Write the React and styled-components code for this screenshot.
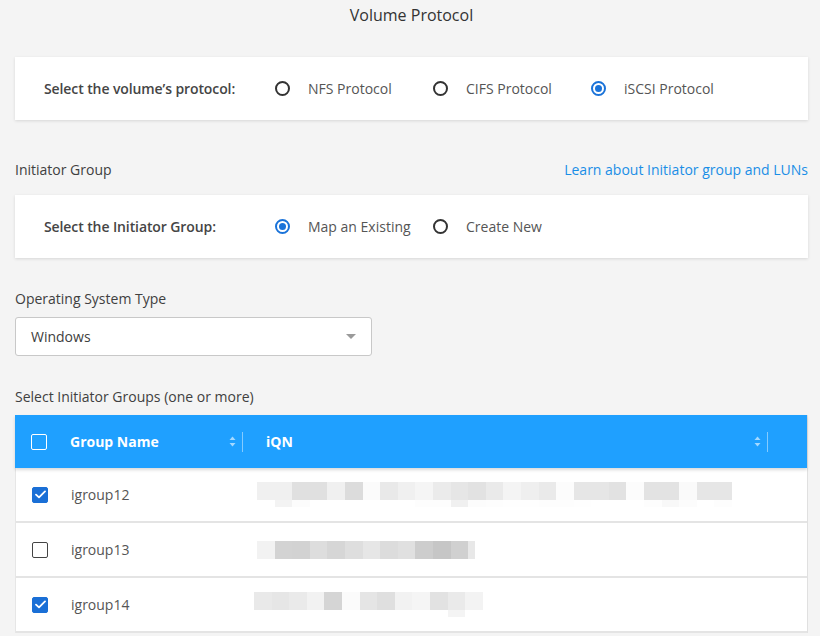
import React from "react";
import styled, { createGlobalStyle } from "styled-components";

const Global = createGlobalStyle`
  html, body { margin: 0; padding: 0; background: #f4f4f4; }
  body { font-family: "Open Sans", "Liberation Sans", sans-serif; color: #404040; }
  * { box-sizing: border-box; }
`;

const Page = styled.div`
  width: 820px;
  height: 636px;
  overflow: hidden;
  padding: 4px 12px 0 15px;
  background: #f4f4f4;
`;

const Title = styled.h1`
  margin: 0;
  height: 22px;
  line-height: 22px;
  font-size: 16px;
  font-weight: 500;
  color: #333;
  text-align: center;
`;

const Card = styled.div`
  margin-top: ${(p) => p.$mt || 0}px;
  height: 63px;
  background: #fff;
  box-shadow: 0 1px 3px rgba(0, 0, 0, 0.12);
  display: flex;
  align-items: center;
  padding-left: 29px;
`;

const CardLabel = styled.div`
  width: 231px;
  font-size: 14px;
  font-weight: 600;
  color: #454545;
  letter-spacing: -0.1px;
`;

const Option = styled.label`
  width: 158px;
  display: flex;
  align-items: center;
  gap: 18px;
  font-size: 14px;
  color: #555;
`;

const RadioCircle = styled.span`
  width: 15px;
  height: 15px;
  border-radius: 50%;
  border: 2px solid ${(p) => (p.$on ? "#1a73d9" : "#333")};
  display: flex;
  align-items: center;
  justify-content: center;
  flex-shrink: 0;
  &::after {
    content: "";
    width: 7px;
    height: 7px;
    border-radius: 50%;
    background: ${(p) => (p.$on ? "#1a73d9" : "transparent")};
  }
`;

const SectionHead = styled.div`
  margin-top: 37px;
  display: flex;
  justify-content: space-between;
  align-items: center;
  height: 24px;
  font-size: 14px;
  color: #404040;
`;

const Link = styled.a`
  color: #1a8ee6;
  text-decoration: none;
  font-size: 14px;
`;

const FieldLabel = styled.div`
  margin-top: ${(p) => p.$mt}px;
  height: 20px;
  line-height: 20px;
  font-size: 14px;
  color: #404040;
`;

const Select = styled.div`
  margin-top: 8px;
  width: 357px;
  height: 39px;
  background: #fff;
  border: 1px solid #c8c8c8;
  border-radius: 3px;
  display: flex;
  align-items: center;
  justify-content: space-between;
  padding: 0 15px 0 15px;
  font-size: 14px;
  color: #404040;
`;

const Caret = styled.span`
  width: 0;
  height: 0;
  border-left: 5px solid transparent;
  border-right: 5px solid transparent;
  border-top: 5px solid #9a9a9a;
`;

const Table = styled.div`
  margin-top: 8px;
  background: #fff;
  border-left: 1px solid #e6e6e6;
  border-right: 1px solid #e0e0e0;
`;

const HeaderRow = styled.div`
  display: grid;
  grid-template-columns: 55px 173px 525px 1fr;
  height: 53px;
  align-items: center;
  background: #1fa0ff;
  box-shadow: 0 2px 3px rgba(0, 0, 0, 0.15);
  position: relative;
  z-index: 1;
  margin-left: -1px;
`;

const Row = styled.div`
  display: grid;
  grid-template-columns: 55px 173px 1fr;
  height: 55px;
  align-items: center;
  border-bottom: 2px solid #e4e4e4;
`;

const CheckCell = styled.div`
  padding-left: 16px;
  display: flex;
  align-items: center;
`;

const Box = styled.span`
  width: 16px;
  height: 16px;
  border-radius: 2px;
  border: 1.5px solid ${(p) => (p.$light ? "#fff" : p.$on ? "#1a6fd6" : "#444")};
  background: ${(p) => (p.$on ? "#1a6fd6" : "transparent")};
  display: flex;
  align-items: center;
  justify-content: center;
`;

const HeadCell = styled.div`
  height: 100%;
  display: flex;
  align-items: center;
  justify-content: space-between;
  padding-left: ${(p) => p.$pl || 0}px;
  font-size: 14px;
  font-weight: 700;
  color: #fff;
`;

const SortWrap = styled.div`
  display: flex;
  align-items: center;
  height: 100%;
`;

const Divider = styled.span`
  width: 1px;
  height: 20px;
  background: rgba(255, 255, 255, 0.45);
  margin-left: 6px;
`;

const NameCell = styled.div`
  font-size: 14px;
  color: #555;
`;

const Blur = styled.div`
  padding-left: ${(p) => p.$pl}px;
  display: flex;
  flex-direction: column;
`;

const BlockLine = styled.div`
  display: flex;
  height: ${(p) => p.$h}px;
`;

const Block = styled.span`
  width: 17.6px;
  height: 100%;
  flex-shrink: 0;
`;

const SortIcon = () => (
  <svg width="7" height="11" viewBox="0 0 7 11">
    <path d="M3.5 0.5 L6.5 4 L0.5 4 Z" fill="rgba(255,255,255,0.6)" />
    <path d="M3.5 10.5 L6.5 7 L0.5 7 Z" fill="rgba(255,255,255,0.6)" />
  </svg>
);

const Check = () => (
  <svg width="11" height="9" viewBox="0 0 11 9">
    <path d="M1 4.6 L4 7.4 L10 1.4" fill="none" stroke="#fff" strokeWidth="1.8" strokeLinecap="round" strokeLinejoin="round" />
  </svg>
);

const Radio = ({ on, children }) => (
  <Option>
    <RadioCircle $on={on} />
    {children}
  </Option>
);

const rows = [
  {
    name: "igroup12",
    on: true,
    pl: 13,
    main: ["f0", "f0", "e0", "e0", "f0", "dc", "fb", "e9", "f0", "f5", "eb", "e6", "e2", "ea", "f4", "ef", "ea", "fc", "e6", "e6", "e2", "fc", "e3", "e3", "fa", "e6", "e6"],
    sub: ["fff", "f3", "fc", "fff", "fff", "fff", "fff", "fff", "fff", "fd", "fd", "f0", "fc", "fd", "fe", "fe", "fd", "fd", "fe", "fff", "fff", "fff", "fd", "f8", "fc", "fff", "fd"],
  },
  {
    name: "igroup13",
    on: false,
    pl: 13,
    main: ["f2", "d3", "d2", "dd", "d6", "de", "e6", "dc", "e0", "cd", "c6", "d0"],
    extra: "e8",
  },
  {
    name: "igroup14",
    on: true,
    pl: 10,
    main: ["e9", "e6", "ea", "f2", "d5", "fb", "e5", "df", "f2", "f5", "e2", "ea", "f3"],
    sub: ["fff", "fff", "fff", "fff", "fff", "fff", "fff", "fff", "fff", "fff", "fff", "f4"],
  },
];

const c = (s) => "#" + (s.length === 3 ? s : s + s + s);

export default function App() {
  return (
    <>
      <Global />
      <Page>
        <Title>Volume Protocol</Title>
        <Card $mt={31}>
          <CardLabel>Select the volume’s protocol:</CardLabel>
          <Radio>NFS Protocol</Radio>
          <Radio>CIFS Protocol</Radio>
          <Radio on>iSCSI Protocol</Radio>
        </Card>

        <SectionHead>
          <span>Initiator Group</span>
          <Link href="#">Learn about Initiator group and LUNs</Link>
        </SectionHead>
        <Card $mt={14}>
          <CardLabel>Select the Initiator Group:</CardLabel>
          <Radio on>Map an Existing</Radio>
          <Radio>Create New</Radio>
        </Card>

        <FieldLabel $mt={31}>Operating System Type</FieldLabel>
        <Select>
          <span>Windows</span>
          <Caret />
        </Select>

        <FieldLabel $mt={31}>Select Initiator Groups (one or more)</FieldLabel>
        <Table>
          <HeaderRow>
            <CheckCell>
              <Box $light />
            </CheckCell>
            <HeadCell>
              <span>Group Name</span>
              <SortWrap>
                <SortIcon />
                <Divider />
              </SortWrap>
            </HeadCell>
            <HeadCell $pl={23}>
              <span>iQN</span>
              <SortWrap>
                <SortIcon />
                <Divider />
              </SortWrap>
            </HeadCell>
            <span />
          </HeaderRow>
          {rows.map((r) => (
            <Row key={r.name}>
              <CheckCell>
                <Box $on={r.on}>{r.on && <Check />}</Box>
              </CheckCell>
              <NameCell>{r.name}</NameCell>
              <Blur $pl={r.pl}>
                <BlockLine $h={18}>
                  {r.main.map((b, i) => (
                    <Block key={i} style={{ background: c(b) }} />
                  ))}
                  {r.extra && <Block style={{ background: c(r.extra), width: 7 }} />}
                </BlockLine>
                {r.sub && (
                  <BlockLine $h={7}>
                    {r.sub.map((b, i) => (
                      <Block key={i} style={{ background: c(b) }} />
                    ))}
                  </BlockLine>
                )}
              </Blur>
            </Row>
          ))}
        </Table>
      </Page>
    </>
  );
}
